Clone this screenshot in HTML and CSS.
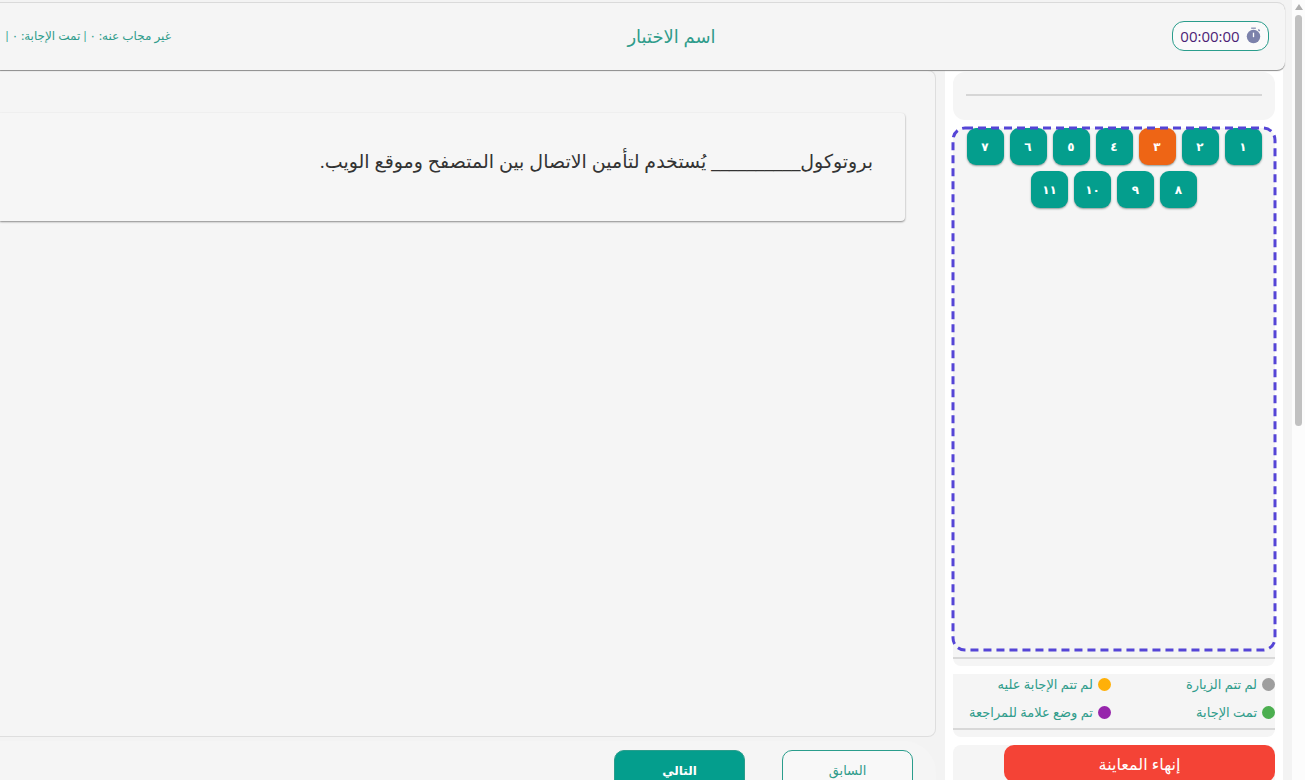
FILE: index.html
```html
<!DOCTYPE html>
<html lang="ar" dir="rtl">
<head>
    <meta charset="UTF-8">
    <meta name="viewport" content="width=device-width, initial-scale=1.0">
    <title>اسم الاختبار</title>
    <link rel="stylesheet" href="styles.css">
</head>
<body>
    <div class="scrollbar" aria-hidden="true">
        <span class="scroll-arrow"></span>
        <span class="scroll-thumb"></span>
    </div>

    <div class="app">
        <header class="exam-header">
            <div class="timer">
                <svg class="timer-icon" viewBox="0 0 16 18" aria-hidden="true">
                    <path d="M5.5 0.5h5v1.4h-5z" fill="#8a8fb3"/>
                    <path d="M12.6 3.2l1-1.1 1.5 1.4-1 1.1z" fill="#7c82ab"/>
                    <circle cx="8" cy="10" r="7.2" fill="#7c82ab"/>
                    <path d="M7.3 6h1.4v4.8H7.3z" fill="#ffffff"/>
                </svg>
                <span class="timer-value">00:00:00</span>
            </div>
            <h1 class="exam-title">اسم الاختبار</h1>
            <p class="exam-stats">غير مجاب عنه: ٠ | تمت الإجابة: ٠ |</p>
        </header>

        <div class="exam-body">
            <aside class="sidebar">
                <div class="section-name"><hr></div>

                <div class="questions">
                    <svg class="questions-frame" aria-hidden="true">
                        <rect width="100%" height="100%" rx="12"/>
                    </svg>
                    <nav class="question-list">
                        <button type="button" class="question">١</button>
                        <button type="button" class="question">٢</button>
                        <button type="button" class="question current">٣</button>
                        <button type="button" class="question">٤</button>
                        <button type="button" class="question">٥</button>
                        <button type="button" class="question">٦</button>
                        <button type="button" class="question">٧</button>
                        <button type="button" class="question">٨</button>
                        <button type="button" class="question">٩</button>
                        <button type="button" class="question">١٠</button>
                        <button type="button" class="question">١١</button>
                    </nav>
                </div>

                <div class="legend-box">
                    <ul class="legend">
                        <li><span class="dot not-visited"></span>لم تتم الزيارة</li>
                        <li><span class="dot not-answered"></span>لم تتم الإجابة عليه</li>
                        <li><span class="dot answered"></span>تمت الإجابة</li>
                        <li><span class="dot review"></span>تم وضع علامة للمراجعة</li>
                    </ul>
                </div>

                <div class="finish-box">
                    <button type="button" class="finish">إنهاء المعاينة</button>
                </div>
            </aside>

            <main class="content">
                <section class="question-panel">
                    <div class="question-card">
                        <p class="question-text">بروتوكول<span class="blank">__________</span> يُستخدم لتأمين الاتصال بين المتصفح وموقع الويب.</p>
                    </div>
                </section>
                <footer class="actions">
                    <button type="button" class="action prev">السابق</button>
                    <button type="button" class="action next">التالي</button>
                </footer>
            </main>
        </div>
    </div>
</body>
</html>
```

FILE: styles.css
```css
* {
    box-sizing: border-box;
}
body {
    display: flex;
    height: 100vh;
    margin: 0;
    overflow: hidden;
    background-color: #f3f3f3;
    color: #2f9c8b;
    font-family: "Open Sans", "DejaVu Sans", sans-serif;
    font-size: 12px;
}
button {
    font-family: inherit;
    cursor: pointer;
}

/* scrollbar */
.scrollbar {
    display: flex;
    flex-direction: column;
    align-items: center;
    gap: 5px;
    flex: none;
    width: 13px;
    padding-top: 4px;
    background-color: #fcfcfc;
}
.scroll-arrow {
    border: 4px solid transparent;
    border-top: 0;
    border-bottom: 6px solid #b0b0b0;
}
.scroll-thumb {
    width: 7px;
    height: 53%;
    border-radius: 4px;
    background-color: #c1c1c1;
}

/* header */
.app {
    display: flex;
    flex-direction: column;
    flex: 1;
    min-width: 0;
    padding-top: 2px;
    padding-right: 7px;
}
.exam-header {
    display: grid;
    grid-template-columns: 97px 1fr 171px;
    align-items: center;
    flex: none;
    height: 68px;
    padding-right: 16px;
    padding-bottom: 2px;
    border-top: 1px solid #dadada;
    border-radius: 0 8px 8px 0;
    background-color: #f5f5f5;
    box-shadow: 0 1px 1px #8c8c8c;
    z-index: 1;
}
.timer {
    display: flex;
    align-items: center;
    justify-content: center;
    gap: 6px;
    height: 30px;
    border: 1px solid #2a9d8c;
    border-radius: 12px;
    background-color: #fafafa;
}
.timer-icon {
    width: 15px;
    height: 17px;
}
.timer-value {
    color: #4c1d75;
    font-size: 15px;
    line-height: 20px;
}
.exam-title {
    margin: 0;
    font-size: 18px;
    font-weight: normal;
    text-align: center;
}
.exam-stats {
    margin: 0;
    font-family: Lato, "DejaVu Sans", sans-serif;
    white-space: nowrap;
}

.exam-body {
    display: flex;
    flex: 1;
    min-height: 0;
}

/* sidebar */
.sidebar {
    display: flex;
    flex-direction: column;
    gap: 8px;
    flex: none;
    width: 338px;
    margin-right: 2px;
    padding: 2px 8px 0;
    background-color: #ffffff;
}
.section-name {
    flex: none;
    height: 48px;
    padding: 22px 13px 0;
    border-radius: 12px;
    background-color: #f5f5f5;
}
.section-name hr {
    height: 2px;
    margin: 0;
    border: 0;
    background-color: #d6d6d6;
}
.questions {
    position: relative;
    flex: 1;
    min-height: 0;
    padding-bottom: 7px;
    border-radius: 12px 12px 8px 8px;
    background-color: #f5f5f5;
}
.questions-frame {
    position: absolute;
    top: 0;
    left: 0;
    width: 100%;
    height: calc(100% - 16px);
    overflow: visible;
    pointer-events: none;
}
.questions-frame rect {
    fill: none;
    stroke: #5545d6;
    stroke-width: 3px;
    stroke-dasharray: 8 5;
}
.question-list {
    display: flex;
    flex-wrap: wrap;
    align-content: flex-start;
    justify-content: center;
    gap: 6px;
    height: 100%;
    border-bottom: 2px solid #d8d8d8;
}
.question {
    width: 37px;
    height: 37px;
    padding: 0;
    border: 0;
    border-radius: 9px;
    background-color: #049e8d;
    box-shadow: 0 1px 2px #8f9b99;
    color: #ffffff;
    font-size: 12px;
    font-weight: bold;
}
.question.current {
    background-color: #ee6515;
}

.legend-box {
    flex: none;
    padding-bottom: 7px;
    border-radius: 0 0 8px 8px;
    background-color: #f5f5f5;
}
.legend {
    display: grid;
    grid-template-columns: 1fr 1fr;
    column-gap: 6px;
    row-gap: 8px;
    margin: 0;
    padding: 0 0 6px;
    border-bottom: 2px solid #d8d8d8;
    font-size: 13px;
    list-style: none;
}
.legend li {
    display: flex;
    align-items: center;
    gap: 5px;
    height: 20px;
    white-space: nowrap;
}
.dot {
    flex: none;
    width: 13px;
    height: 13px;
    border-radius: 50%;
}
.not-visited {
    background-color: #9e9e9e;
}
.not-answered {
    background-color: #ffb008;
}
.answered {
    background-color: #4caf50;
}
.review {
    background-color: #9726ac;
}
.finish-box {
    flex: none;
    height: 35px;
    border-radius: 8px 8px 0 0;
    background-color: #f5f5f5;
}
.finish {
    display: block;
    width: 271px;
    height: 37px;
    border: 0;
    border-radius: 10px;
    background-color: #f44336;
    color: #ffffff;
    font-size: 16px;
}

/* question */
.content {
    display: flex;
    flex-direction: column;
    flex: 1;
    min-width: 0;
    padding-right: 9px;
}
.question-panel {
    flex: 1;
    padding: 42px 30px 0 0;
    border: 1px solid #dedede;
    border-left: 0;
    border-radius: 0 8px 8px 0;
    background-color: #f5f5f5;
}
.question-card {
    height: 108px;
    padding: 32px;
    border-radius: 0 4px 4px 0;
    background-color: #f6f6f6;
    box-shadow: 0 1px 2px #8a8a8a;
}
.question-text {
    margin: 0;
    color: #333333;
    font-size: 19px;
    line-height: 32px;
}
.blank {
    font-family: "Liberation Sans", sans-serif;
    font-size: 16px;
}
.actions {
    display: flex;
    gap: 37px;
    flex: none;
    height: 39px;
    margin-top: 4px;
    padding: 9px 23px 0 0;
    border-radius: 0 32px 0 0;
    background-color: #f5f5f5;
}
.action {
    flex: none;
    width: 131px;
    height: 40px;
    border: 1px solid #2a9d8c;
    border-radius: 10px;
    font-size: 13px;
}
.prev {
    background-color: #f8f8f8;
    color: #2f9c8b;
}
.next {
    background-color: #049e8d;
    color: #ffffff;
    font-size: 12px;
    font-weight: bold;
}
```
